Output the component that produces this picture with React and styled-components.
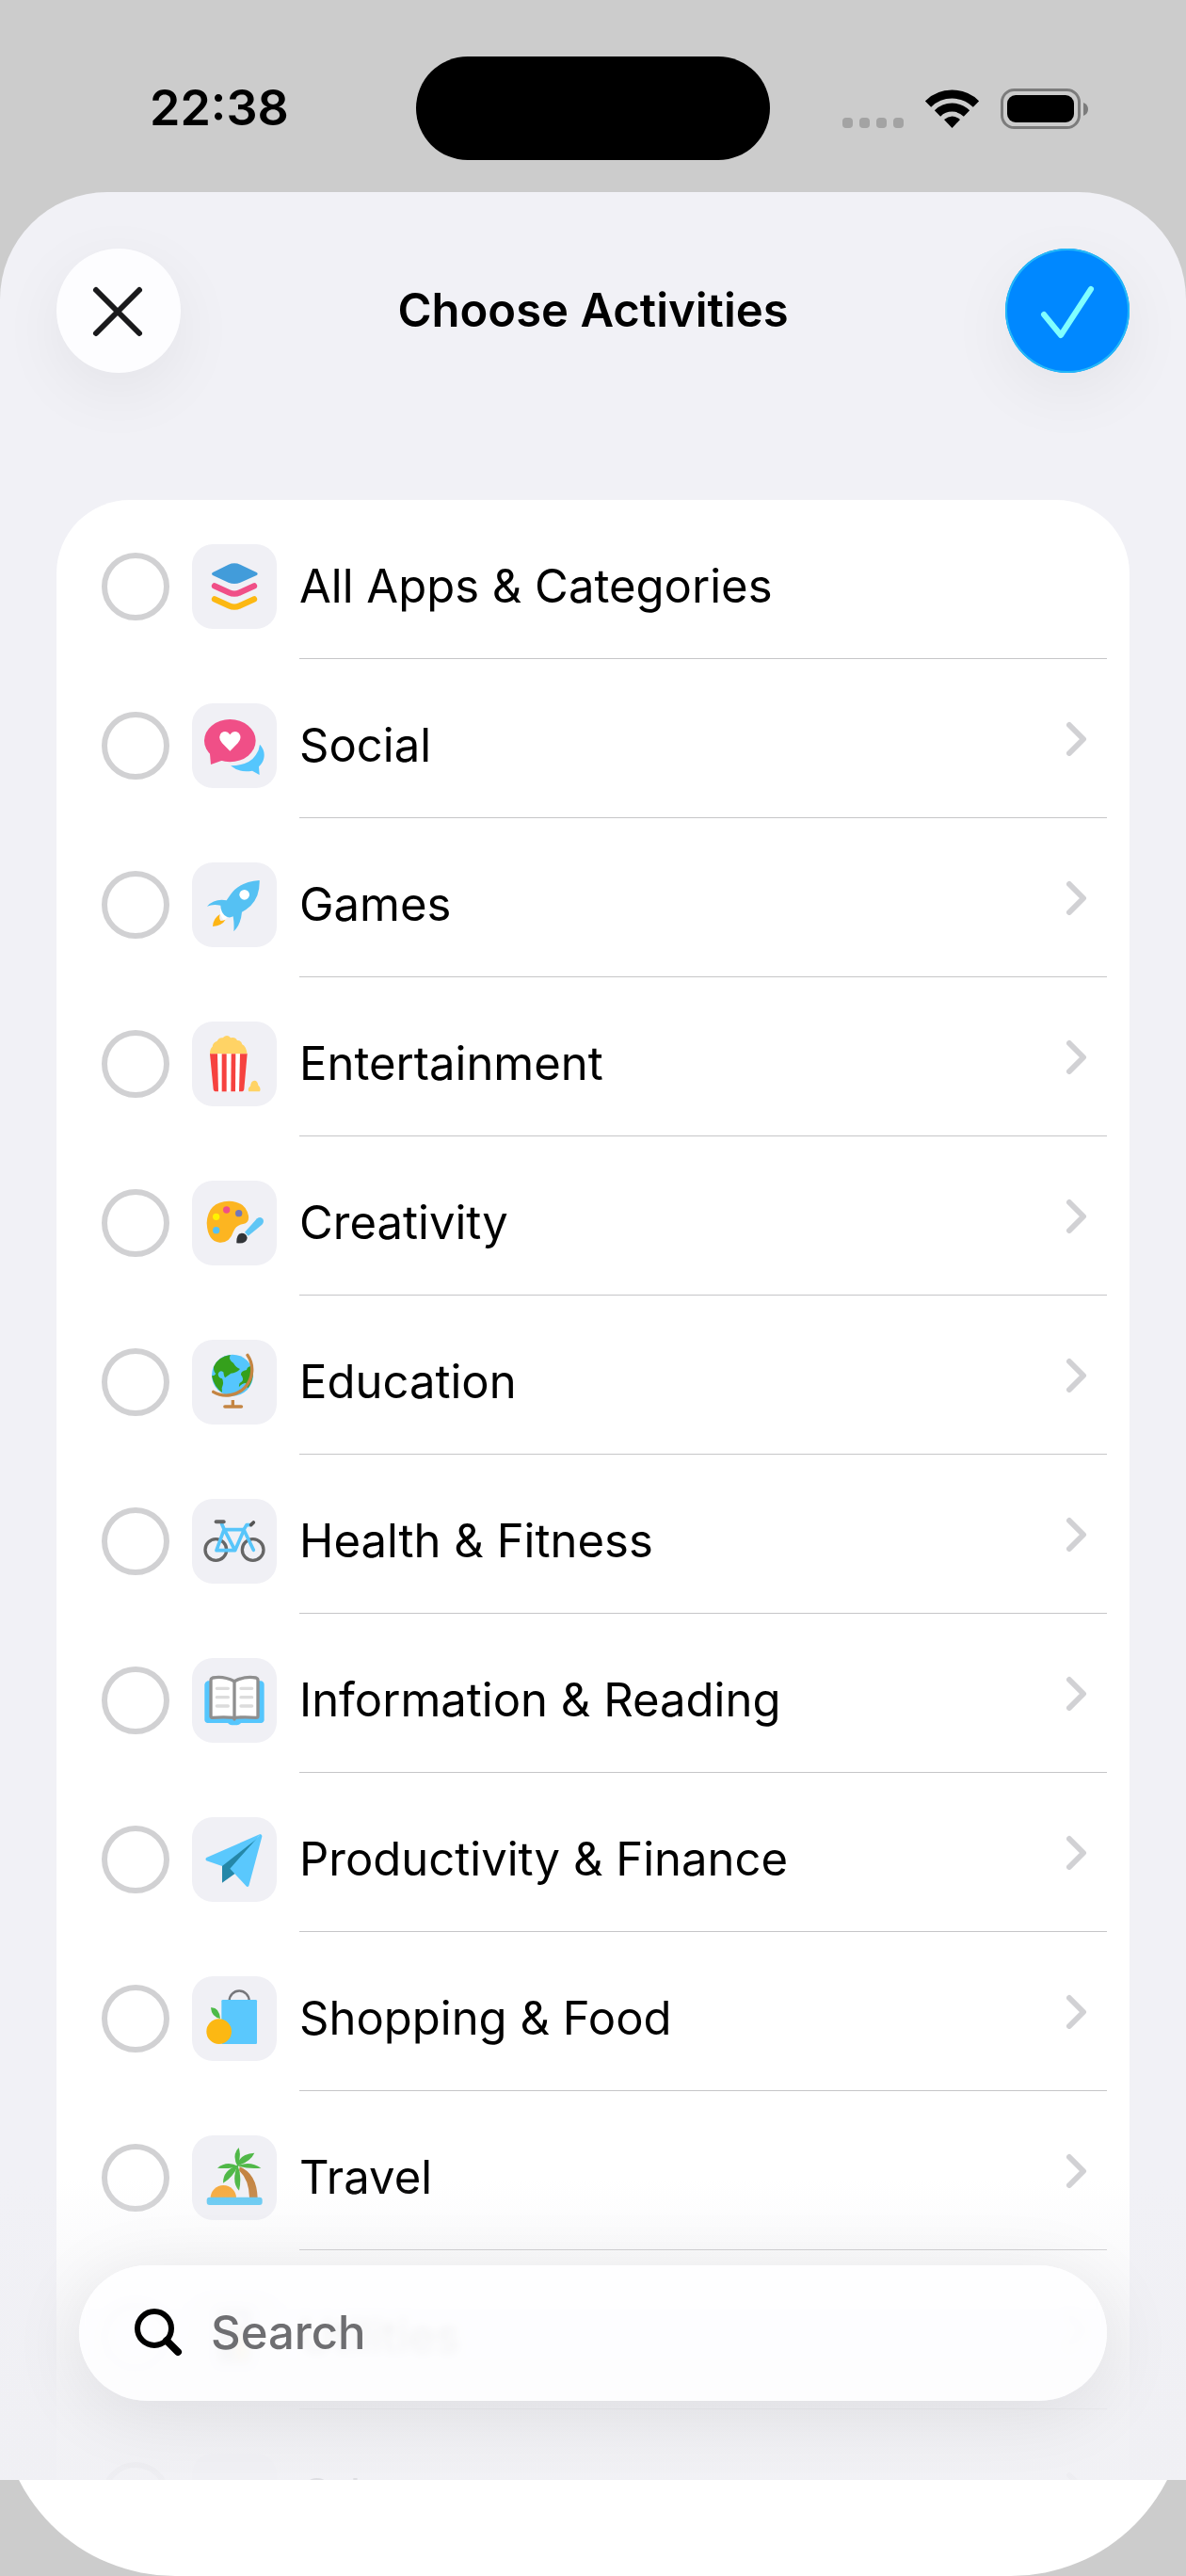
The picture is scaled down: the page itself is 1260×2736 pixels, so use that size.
import React, { useState } from "react";
import styled, { createGlobalStyle, css } from "styled-components";

const LayersIcon = () => (
  <Art viewBox="0 0 270 270">
    <path
      fill="#429cda"
      d="M66 90 L116 65 Q135 57 154 65 L206 90 Q212 94 206 99 L154 122 Q135 130 116 122 L66 99 Q60 94 66 90Z"
    />
    <g fill="none" strokeWidth="19" strokeLinecap="round" strokeLinejoin="round">
      <path stroke="#f04f87" d="M72 133 L118 154 Q135 162 152 154 L198 133" />
      <path stroke="#fcb813" d="M72 175 L118 196 Q135 204 152 196 L198 175" />
    </g>
  </Art>
);

const SocialIcon = () => (
  <Art viewBox="0 0 270 270">
    <path
      fill="#55c6fd"
      d="M216 131 Q234 150 229 175 Q226 190 213 202 L215 228 L192 215 Q150 222 123 199 Q182 198 203 165 Q214 150 216 131Z"
    />
    <ellipse cx="121" cy="119" rx="82" ry="68" fill="#f04f87" />
    <path fill="#f04f87" d="M56 150 L60 195 L102 180Z" />
    <path
      fill="#fff"
      d="M121 152 L96 127 Q80 107 94 94 Q110 84 121 100 Q132 84 148 94 Q162 107 146 127Z"
    />
  </Art>
);

const RocketIcon = () => (
  <Art viewBox="0 0 270 270">
    <path fill="#fff" d="M90 148 L90 166 L102 188 L114 172Z" />
    <path
      fill="#55c1f3"
      d="M215 57 Q217 108 187 138 Q172 152 159 158 Q156 198 133 220 Q135 196 131 172 Q116 180 103 168 Q92 156 91 137 Q66 132 48 140 Q72 114 110 121 L123 102 Q150 62 215 57Z"
    />
    <circle cx="167" cy="103" r="16" fill="#fff" />
    <path
      fill="#fdb515"
      d="M89 165 Q67 178 66 204 Q96 201 107 182 Q98 186 91 186 Q85 178 89 165Z"
    />
  </Art>
);

const PopcornIcon = () => (
  <Art viewBox="0 0 270 270">
    <path
      fill="#ffd365"
      d="M57 104 Q56 88 65 80 Q66 66 80 62 Q86 50 98 52 Q112 38 123 52 Q138 48 144 60 Q158 60 160 73 Q172 78 176 104Z"
    />
    <path fill="#fff" d="M60 103 H174 L164 223 H70Z" />
    <g fill="#f6423f">
      <path d="M57 103 H81 L84 223 H77 Q69 223 68 215Z" />
      <path d="M95 103 H110 V223 H95Z" />
      <path d="M125 103 H139 L138 223 H124Z" />
      <path d="M153 103 H176 L166 215 Q165 223 157 223 H150Z" />
    </g>
    <path
      fill="#ffd365"
      d="M181 223 Q176 212 186 206 Q188 188 199 188 Q209 188 211 203 Q221 212 216 223Z"
    />
  </Art>
);

const PaletteIcon = () => (
  <Art viewBox="0 0 270 270">
    <path
      fill="#fcb521"
      d="M47 135 Q50 67 118 65 Q170 66 180 112 Q183 134 163 138 Q140 142 132 162 Q120 199 88 197 Q50 194 47 135Z"
    />
    <circle cx="110" cy="93" r="11" fill="#f04f87" />
    <circle cx="149" cy="104" r="11" fill="#7277b8" />
    <circle cx="77" cy="115" r="11" fill="#fff200" />
    <circle cx="77" cy="158" r="11" fill="#55c1f3" />
    <path fill="#5fc6f5" d="M168 164 L207 121 Q218 113 226 122 Q231 131 223 140 L179 176Z" />
    <path
      fill="#323539"
      d="M142 199 Q141 170 158 167 Q173 167 176 182 Q175 202 142 199Z"
    />
  </Art>
);

const GlobeIcon = () => (
  <Art viewBox="0 0 270 270">
    <circle cx="129" cy="113" r="66" fill="#55c6fd" />
    <g fill="#35a01c">
      <path d="M122 48 Q115 64 132 74 Q140 88 153 93 Q142 106 124 107 L105 121 Q101 114 100 103 Q88 95 83 109 Q84 122 96 124 Q103 136 95 154 L96 168 Q70 150 63 115 Q72 116 76 108 Q68 100 69 86 Q84 53 122 48Z" />
      <path d="M188 84 Q176 86 174 96 Q155 99 156 112 Q166 122 160 132 Q148 138 150 150 Q160 138 172 137 Q170 148 178 154 Q200 124 192 90Z" />
    </g>
    <g fill="none" stroke="#c48543" strokeLinecap="round">
      <path strokeWidth="10" d="M177 49 A82 82 0 0 1 68 166" />
      <path strokeWidth="10" strokeLinecap="butt" d="M130 192 V214" />
      <path strokeWidth="11" d="M105 213 H157" />
    </g>
  </Art>
);

const BikeIcon = () => (
  <Art viewBox="0 0 270 270">
    <g fill="none" strokeLinecap="round" strokeLinejoin="round">
      <g stroke="#666" strokeWidth="10">
        <circle cx="76" cy="162" r="34" />
        <circle cx="194" cy="162" r="34" />
      </g>
      <g stroke="#58c5fa" strokeWidth="11">
        <path d="M95 80 L103 98 L137 164 H78 L102 98 H166 L137 164" />
        <path d="M184 83 H174 L165 98 L196 163" />
      </g>
      <path stroke="#666" strokeWidth="12" d="M77 73 H101" />
      <path stroke="#555" strokeWidth="11" d="M188 83 L196 75" />
    </g>
  </Art>
);

const BookIcon = () => (
  <Art viewBox="0 0 270 270">
    <path
      fill="#55c6fd"
      d="M50 73 H220 Q230 76 230 84 V199 Q229 206 222 207 H156 Q150 214 143 214 H127 Q120 214 114 207 H48 Q41 206 40 199 V84 Q41 76 50 73Z"
    />
    <path
      fill="#fff"
      stroke="#8f8f8f"
      strokeWidth="10"
      strokeLinejoin="round"
      d="M135 74 Q100 56 66 63 Q60 65 60 71 V186 Q61 190 66 190 Q100 187 135 190 Q170 187 204 190 Q210 190 210 186 V71 Q210 65 204 63 Q170 56 135 74Z"
    />
    <path stroke="#8f8f8f" strokeWidth="10" strokeLinecap="round" d="M135 74 V195" />
    <path
      stroke="#dcdcdc"
      strokeWidth="10"
      strokeLinecap="round"
      d="M79 97 H115 M79 125 H115 M79 153 H115 M156 97 H191 M156 125 H191 M156 153 H191"
    />
  </Art>
);

const PlaneIcon = () => (
  <Art viewBox="0 0 270 270">
    <path fill="#2487a8" d="M96 150 L210 64 L140 178 L96 209Z" />
    <g fill="#5ac8fd">
      <path d="M217 54 L46 129 Q41 134 46 139 L96 156 L203 72Z" />
      <path d="M203 72 L217 54 Q224 55 223 62 L181 219 Q177 225 172 219 L121 164Z" />
    </g>
  </Art>
);

const ShoppingIcon = () => (
  <Art viewBox="0 0 270 270">
    <path fill="none" stroke="#77777b" strokeWidth="7" d="M119 78 A31 31 0 0 1 182 78" />
    <rect x="94" y="75" width="113" height="141" rx="4" fill="#5ac8fd" />
    <circle cx="86" cy="176" r="40" fill="#fcb813" />
    <path fill="#4dba47" d="M60 100 Q86 98 90 135 Q62 130 60 100Z" />
  </Art>
);

const PalmIcon = () => (
  <Art viewBox="0 0 270 270">
    <path fill="#f5a93b" d="M59 199 A41 40 0 0 1 141 199Z" />
    <path fill="#c48543" d="M152 100 Q206 122 209 199 H183 Q182 142 150 112Z" />
    <g fill="#50b848">
      <path d="M145 98 Q126 62 149 39 Q158 68 145 98Z" />
      <path d="M143 98 Q150 58 199 56 Q186 84 143 98Z" />
      <path d="M143 97 Q186 80 220 104 Q180 108 143 97Z" />
      <path d="M147 98 Q110 80 81 104 Q122 108 147 98Z" />
      <path d="M147 95 Q98 110 99 152 Q132 132 147 95Z" />
      <path d="M145 94 Q124 150 150 176 Q160 130 145 94Z" />
    </g>
    <rect x="47" y="197" width="177" height="25" rx="9" fill="#62c8f2" />
  </Art>
);

const UtilitiesIcon = () => (
  <Art viewBox="0 0 270 270">
    <rect x="84" y="50" width="102" height="170" rx="12" fill="#77777b" />
    <rect x="98" y="64" width="74" height="36" fill="#dcdcdc" />
    <path fill="#fcb813" d="M142 120 H172 V206 H142Z" />
  </Art>
);

const OtherIcon = () => (
  <Art viewBox="0 0 270 270">
    <g fill="#a5a5aa">
      <circle cx="85" cy="135" r="14" />
      <circle cx="135" cy="135" r="14" />
      <circle cx="185" cy="135" r="14" />
    </g>
  </Art>
);

const activities = [
  { id: "all", name: "All Apps & Categories", Icon: LayersIcon, leaf: true },
  { id: "social", name: "Social", Icon: SocialIcon },
  { id: "games", name: "Games", Icon: RocketIcon },
  { id: "entertainment", name: "Entertainment", Icon: PopcornIcon },
  { id: "creativity", name: "Creativity", Icon: PaletteIcon },
  { id: "education", name: "Education", Icon: GlobeIcon },
  { id: "health", name: "Health & Fitness", Icon: BikeIcon },
  { id: "reading", name: "Information & Reading", Icon: BookIcon },
  { id: "productivity", name: "Productivity & Finance", Icon: PlaneIcon },
  { id: "shopping", name: "Shopping & Food", Icon: ShoppingIcon },
  { id: "travel", name: "Travel", Icon: PalmIcon },
  { id: "utilities", name: "Utilities", Icon: UtilitiesIcon },
  { id: "other", name: "Other", Icon: OtherIcon },
];

function StatusBar() {
  return (
    <Status>
      <Time>22:38</Time>
      <Island />
      <Indicators>
        <svg width="65" height="43" viewBox="0 0 65 43" fill="#a3a3a3">
          <rect x="0" y="31" width="11" height="11" rx="4" />
          <rect x="18" y="31" width="11" height="11" rx="4" />
          <rect x="36" y="31" width="11" height="11" rx="4" />
          <rect x="54" y="31" width="11" height="11" rx="4" />
        </svg>
        <svg width="57" height="43" viewBox="0 0 57 43">
          <g fill="none" stroke="#000" strokeWidth="9">
            <path d="M3 16.500 A36.500 36.500 0 0 1 54 16.500" />
            <path d="M13 26.500 A22 22 0 0 1 44 26.500" />
          </g>
          <path d="M20 33 Q28.500 26 37 33 L28.500 42Z" />
        </svg>
        <svg width="93" height="43" viewBox="0 0 93 43">
          <rect
            x="1.500"
            y="1.500"
            width="82"
            height="40"
            rx="13"
            fill="none"
            stroke="#7c7c7c"
            strokeWidth="3"
          />
          <rect x="7" y="7" width="71" height="29" rx="9" />
          <path d="M88 15 Q93 17 93 22 Q93 27 88 29Z" fill="#7c7c7c" />
        </svg>
      </Indicators>
    </Status>
  );
}

function App() {
  const [selected, setSelected] = useState([]);
  const [query, setQuery] = useState("");

  const toggle = (id) => {
    setSelected((prev) =>
      prev.includes(id) ? prev.filter((item) => item !== id) : [...prev, id]
    );
  };

  return (
    <Screen>
      <GlobalStyle />
      <StatusBar />

      <Sheet>
        <Header>
          <RoundButton type="button" aria-label="Close">
            <svg width="132" height="132" viewBox="0 0 132 132">
              <path d="M42 44 L88 90 M88 44 L42 90" />
            </svg>
          </RoundButton>
          <h1>Choose Activities</h1>
          <RoundButton type="button" aria-label="Done" $primary>
            <svg width="132" height="132" viewBox="0 0 132 132">
              <path d="M41 70 L59 92 L91 43" />
            </svg>
          </RoundButton>
        </Header>

        <List>
          {activities.map(({ id, name, Icon, leaf }) => (
            <Row key={id}>
              <Check
                id={id}
                type="checkbox"
                checked={selected.includes(id)}
                onChange={() => toggle(id)}
              />
              <Tile>
                <Icon />
              </Tile>
              <RowBody>
                <label htmlFor={id}>{name}</label>
                {!leaf && (
                  <Disclosure type="button" aria-label={`Show ${name}`}>
                    <svg width="22" height="38" viewBox="0 0 22 38">
                      <path d="M3 5 L18 20 L3 35" />
                    </svg>
                  </Disclosure>
                )}
              </RowBody>
            </Row>
          ))}
        </List>

        <Fade />
        <SearchBar>
          <svg width="54" height="54" viewBox="0 0 54 54">
            <circle cx="24" cy="22" r="18" />
            <path d="M37 35 L49 47" />
          </svg>
          <input
            type="search"
            aria-label="Search"
            placeholder="Search"
            value={query}
            onChange={(e) => setQuery(e.target.value)}
          />
        </SearchBar>
      </Sheet>

      <Underlay>
        <div />
      </Underlay>
    </Screen>
  );
}

const GlobalStyle = createGlobalStyle`
  * {
    box-sizing: border-box;
    margin: 0;
    padding: 0;
  }

  body {
    background-color: #ccc;
    color: #000;
    font-family: Inter, "Liberation Sans", sans-serif;
    font-size: 49px;
  }

  button {
    border: none;
    background: none;
    cursor: pointer;
  }

  svg {
    display: block;
  }
`;

const Screen = styled.div`
  height: 100vh;
  display: flex;
  flex-direction: column;
`;

const Status = styled.div`
  display: grid;
  grid-template-columns: 1fr 376px 1fr;
  align-items: center;
  padding: 60px 0 34px;
`;

const Time = styled.p`
  padding-left: 159px;
  font-size: 52px;
  font-weight: 600;
  line-height: 60px;
`;

const Island = styled.div`
  height: 110px;
  border-radius: 55px;
  background-color: #000;
`;

const Indicators = styled.div`
  display: flex;
  justify-content: flex-end;
  gap: 23px;
  padding-right: 104px;
`;

const Sheet = styled.main`
  position: relative;
  flex: 1;
  min-height: 0;
  overflow: hidden;
  border-radius: 114px 114px 0 0;
  background-color: #f1f1f6;
`;

const Header = styled.header`
  display: flex;
  align-items: center;
  justify-content: space-between;
  padding: 60px 60px 135px;

  h1 {
    font-size: 49px;
    font-weight: 600;
    line-height: 60px;
  }
`;

const RoundButton = styled.button`
  width: 132px;
  height: 132px;
  border-radius: 50%;
  background-color: #fdfdff;
  box-shadow: 0 20px 70px rgba(0, 0, 0, 0.06);

  path {
    fill: none;
    stroke: #1a1a1c;
    stroke-width: 6px;
    stroke-linecap: round;
    stroke-linejoin: round;
  }

  ${(props) =>
    props.$primary &&
    css`
      background-color: #0088ff;
      box-shadow: inset 0 0 0 2px #22b8f8, 0 20px 70px rgba(0, 0, 0, 0.06);

      path {
        stroke: #80ffff;
      }
    `}
`;

const List = styled.ul`
  margin: 0 60px;
  border-radius: 78px;
  background-color: #fff;
  list-style: none;
`;

const Row = styled.li`
  display: flex;
  align-items: stretch;
  gap: 24px;
  height: 169px;
  padding: 0 24px 0 48px;
`;

const Check = styled.input`
  appearance: none;
  flex: none;
  width: 72px;
  height: 72px;
  margin-top: 56px;
  border: 6px solid #d1d1d3;
  border-radius: 50%;

  &:checked {
    border-color: #0088ff;
    background-color: #0088ff;
  }
`;

const Tile = styled.span`
  flex: none;
  width: 90px;
  height: 90px;
  margin-top: 47px;
  border-radius: 22px;
  background-color: #f0f0f5;
`;

const Art = styled.svg`
  width: 90px;
  height: 90px;
`;

const RowBody = styled.div`
  flex: 1;
  display: flex;
  align-items: center;
  justify-content: space-between;
  border-bottom: 1px solid #c6c6c8;

  label {
    padding-top: 16px;
    line-height: 60px;
  }
`;

const Disclosure = styled.button`
  padding: 24px 21px;

  path {
    fill: none;
    stroke: #d1d1d4;
    stroke-width: 6px;
    stroke-linecap: round;
    stroke-linejoin: round;
  }
`;

const Fade = styled.div`
  position: absolute;
  left: 0;
  right: 0;
  bottom: 0;
  height: 320px;
  pointer-events: none;
  background: linear-gradient(
    rgba(240, 240, 244, 0),
    rgba(240, 240, 244, 0.3) 25%,
    rgba(240, 240, 244, 0.88) 75%,
    rgba(240, 240, 244, 0.92)
  );
`;

const SearchBar = styled.div`
  position: absolute;
  left: 84px;
  right: 84px;
  bottom: 84px;
  display: flex;
  align-items: center;
  gap: 30px;
  height: 144px;
  padding: 0 56px;
  border-radius: 72px;
  background-color: rgba(254, 254, 255, 0.88);
  backdrop-filter: blur(5px);
  box-shadow: 0 12px 80px rgba(0, 0, 0, 0.09);

  circle,
  path {
    fill: none;
    stroke: #000;
    stroke-width: 6px;
    stroke-linecap: round;
  }

  path {
    stroke-width: 8px;
  }

  input {
    flex: 1;
    min-width: 0;
    border: none;
    outline: none;
    background: none;
    font: inherit;
    font-weight: 500;
    line-height: 60px;
  }

  input::placeholder {
    color: #6e6e71;
    opacity: 1;
  }
`;

// rounded bottom of the page that sits behind the sheet
const Underlay = styled.div`
  flex: none;
  display: flex;
  align-items: flex-end;
  height: 102px;
  overflow: hidden;

  div {
    flex: 1;
    height: 186px;
    border-radius: 0 0 186px 186px;
    background-color: #fff;
  }
`;

export default App;
